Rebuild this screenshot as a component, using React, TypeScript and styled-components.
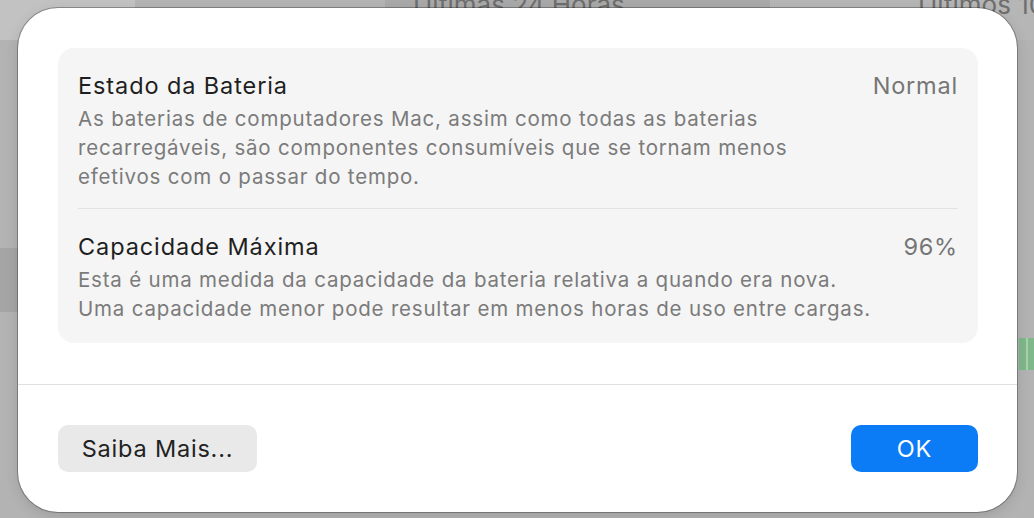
import React from "react";
import styled, { createGlobalStyle } from "styled-components";

const GlobalStyle = createGlobalStyle`
  html, body {
    margin: 0;
    padding: 0;
    width: 1034px;
    height: 518px;
    overflow: hidden;
    background: #b2b2b2;
    font-family: Inter, "Noto Sans", "Liberation Sans", sans-serif;
    -webkit-font-smoothing: antialiased;
  }
`;

const Backdrop = styled.div`
  position: relative;
  width: 1034px;
  height: 518px;
  overflow: hidden;
  background: #b3b3b3;
`;

const TopStrip = styled.div`
  display: grid;
  grid-template-columns: 135px 250px 385px 1fr;
  height: 40px;
  background: #b9b9b9;
`;

const StripCell = styled.div<{ $tone: string }>`
  background: ${(p) => p.$tone};
`;

// labels of the window behind the sheet, mostly hidden by it
const BackdropLabel = styled.span<{ $left: number }>`
  position: absolute;
  top: -10px;
  left: ${(p) => p.$left}px;
  font-size: 26px;
  line-height: 30px;
  color: #6e6e6e;
  white-space: nowrap;
`;

const SideBand = styled.div<{ $top: number; $height: number; $left: number; $width: number; $color: string }>`
  position: absolute;
  top: ${(p) => p.$top}px;
  left: ${(p) => p.$left}px;
  width: ${(p) => p.$width}px;
  height: ${(p) => p.$height}px;
  background: ${(p) => p.$color};
`;

const Dialog = styled.div`
  position: absolute;
  top: 8px;
  left: 18px;
  width: 999px;
  height: 504px;
  box-sizing: border-box;
  background: #ffffff;
  border-radius: 40px;
  box-shadow: 0 0 0 1px rgba(0, 0, 0, 0.28), 0 4px 14px rgba(0, 0, 0, 0.12);
  display: flex;
  flex-direction: column;
  overflow: hidden;
`;

const Body = styled.div`
  padding: 40px 39px 0 40px;
`;

const Card = styled.div`
  background: #f5f5f5;
  border-radius: 16px;
  padding: 0 20px;
`;

const Row = styled.div<{ $last?: boolean }>`
  padding: 23px 0 ${(p) => (p.$last ? "20px" : "17px")};
  border-bottom: ${(p) => (p.$last ? "none" : "1px solid #e2e2e2")};
`;

const RowHead = styled.div`
  display: flex;
  justify-content: space-between;
  align-items: center;
  height: 28px;
  margin-bottom: 5px;
`;

const Title = styled.span`
  font-size: 23.5px;
  color: #1f1f1f;
  letter-spacing: 0.9px;
`;

const Value = styled.span`
  font-size: 23.5px;
  color: #767676;
  letter-spacing: 0.8px;
`;

const Description = styled.p`
  margin: 0;
  font-size: 20.5px;
  line-height: 29px;
  color: #7b7b7b;
  letter-spacing: 0.8px;
  white-space: nowrap;
`;

const Separator = styled.div`
  margin-top: 41px;
  height: 1px;
  background: #e0e0e0;
`;

const Footer = styled.div`
  display: flex;
  justify-content: space-between;
  align-items: center;
  padding: 40px 39px 0 40px;
`;

const Button = styled.button<{ $primary?: boolean }>`
  height: 47px;
  border: none;
  border-radius: 10px;
  font-family: inherit;
  font-size: 23.5px;
  letter-spacing: 0.8px;
  padding: 0;
  width: ${(p) => (p.$primary ? "127px" : "199px")};
  background: ${(p) => (p.$primary ? "#0b7cf6" : "#e9e9e9")};
  color: ${(p) => (p.$primary ? "#ffffff" : "#222222")};
  cursor: pointer;
`;

export default function App() {
  return (
    <>
      <GlobalStyle />
      <Backdrop>
        <TopStrip>
          <StripCell $tone="#c2c2c2" />
          <StripCell $tone="#b4b4b4" />
          <StripCell $tone="#a9a9a9" />
          <StripCell $tone="#b6b6b6" />
        </TopStrip>
        <BackdropLabel $left={413}>Últimas 24 Horas</BackdropLabel>
        <BackdropLabel $left={918}>Últimos 10 Dias</BackdropLabel>
        <SideBand $top={248} $height={64} $left={0} $width={18} $color="#a5a5a5" />
        <SideBand $top={338} $height={32} $left={1019} $width={15} $color="#7fb88a" />
        <SideBand $top={338} $height={32} $left={1026} $width={2} $color="#a9d0b0" />
        <Dialog>
          <Body>
            <Card>
              <Row>
                <RowHead>
                  <Title>Estado da Bateria</Title>
                  <Value>Normal</Value>
                </RowHead>
                <Description>
                  As baterias de computadores Mac, assim como todas as baterias
                  <br />
                  recarregáveis, são componentes consumíveis que se tornam menos
                  <br />
                  efetivos com o passar do tempo.
                </Description>
              </Row>
              <Row $last>
                <RowHead>
                  <Title>Capacidade Máxima</Title>
                  <Value>96%</Value>
                </RowHead>
                <Description>
                  Esta é uma medida da capacidade da bateria relativa a quando era nova.
                  <br />
                  Uma capacidade menor pode resultar em menos horas de uso entre cargas.
                </Description>
              </Row>
            </Card>
          </Body>
          <Separator />
          <Footer>
            <Button>Saiba Mais...</Button>
            <Button $primary>OK</Button>
          </Footer>
        </Dialog>
      </Backdrop>
    </>
  );
}
